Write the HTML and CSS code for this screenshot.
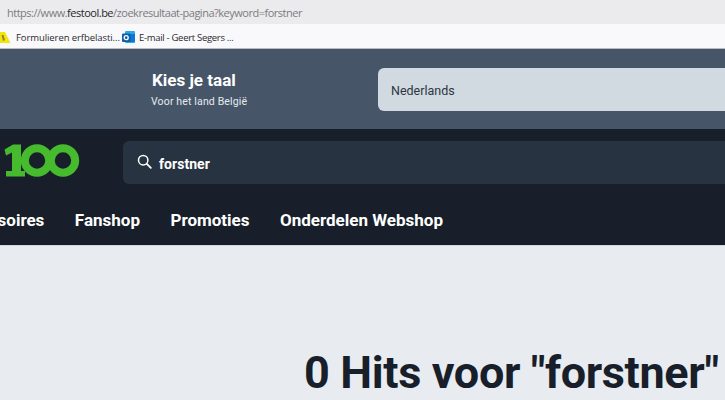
FILE: index.html
```html
<!DOCTYPE html>
<html lang="nl">
<head>
<meta charset="utf-8">
<title>Festool zoekresultaat</title>
<link rel="stylesheet" href="styles.css">
</head>
<body>
<div class="urlbar"><span class="url-dim">https://www.</span><span class="url-host">festool.be</span><span class="url-dim">/zoekresultaat-pagina?keyword=forstner</span></div>
<div class="bookmarks">
  <div class="bookmark bookmark-first">
    <svg class="favicon favicon-yellow" width="11" height="12" viewBox="0 0 11 12"><path d="M0 0h5l5.500 11H0z" fill="#f3e50c"/><path d="M1.500 3l2 0 1.500 5-2 1z" fill="#8f8a2a"/></svg>
    <span>Formulieren erfbelasti...</span>
  </div>
  <div class="bookmark bookmark-second">
    <svg class="favicon" width="13" height="13" viewBox="0 0 13 13"><rect x="3" y="0" width="10" height="12" rx="1" fill="#28a8ea"/><rect x="8" y="3" width="5" height="8" fill="#0f78d4"/><rect x="0" y="2.500" width="8.500" height="8.500" rx="1" fill="#0f5fa8"/><circle cx="4.200" cy="6.700" r="2" fill="none" stroke="#fff" stroke-width="1.300"/></svg>
    <span>E-mail - Geert Segers ...</span>
  </div>
</div>
<section class="lang">
  <div class="lang-text">
    <div class="lang-title">Kies je taal</div>
    <div class="lang-sub">Voor het land België</div>
  </div>
  <div class="lang-select">Nederlands</div>
</section>
<header class="header">
  <div class="header-top">
    <svg class="logo" width="76" height="33" viewBox="0 0 76 33">
      <path d="M0.500 5.500 9 0.500h8v26.500h4v5.500H2v-5.500h6V8.500l-6 3z" fill="#46bb2d"/>
      <circle cx="33" cy="16.500" r="12.200" fill="none" stroke="#46bb2d" stroke-width="8"/>
      <circle cx="59" cy="16.500" r="12.200" fill="none" stroke="#46bb2d" stroke-width="8"/>
    </svg>
    <div class="search">
      <svg class="search-icon" width="15" height="15" viewBox="0 0 15 15"><circle cx="6.200" cy="6.200" r="4.700" fill="none" stroke="#fff" stroke-width="1.500"/><path d="M9.800 9.800 13.800 13.800" stroke="#fff" stroke-width="1.800" stroke-linecap="round"/></svg>
      <span class="search-text">forstner</span>
    </div>
  </div>
  <nav class="nav">
    <a class="nav-item">Accessoires</a>
    <a class="nav-item">Fanshop</a>
    <a class="nav-item">Promoties</a>
    <a class="nav-item">Onderdelen Webshop</a>
  </nav>
</header>
<main class="main">
  <h1 class="hits">0 Hits voor "forstner"</h1>
</main>
</body>
</html>
```
FILE: styles.css
```css
* { box-sizing: border-box; }
html, body { margin: 0; padding: 0; height: 400px; overflow: hidden; }
body { width: 725px; background: #e8ecf1; font-family: "Roboto", "Liberation Sans", sans-serif; }

.urlbar {
  height: 24px;
  background: #ebebed;
  padding-left: 7px;
  font: 11px/25px "Open Sans", sans-serif;
  letter-spacing: -0.490px;
  white-space: nowrap;
}
.url-dim { color: #7b7b7e; }
.url-host { color: #27272a; }

.bookmarks {
  height: 25px;
  padding-top: 3px;
  background: #f9f9fb;
  border-bottom: 1px solid #b9bcc0;
  display: flex;
  align-items: center;
  font: 9.500px "Open Sans", sans-serif;
  letter-spacing: -0.080px;
  color: #2a2a2e;
  white-space: nowrap;
}
.bookmark { display: flex; align-items: center; gap: 4px; }
.bookmark-first { width: 122px; gap: 5px; }
.bookmark-second { letter-spacing: -0.300px; }
.favicon { flex: none; }

.lang {
  height: 80px;
  background: #465668;
  display: flex;
  align-items: center;
  padding-left: 152px;
}
.lang-text { width: 226px; color: #fff; }
.lang-title { font-size: 17px; font-weight: 700; line-height: 20px; }
.lang-sub { font-size: 10.500px; line-height: 15px; margin: 4px 0 0 -1px; color: #e6eaef; letter-spacing: 0.150px; }
.lang-select {
  flex: 1;
  height: 43px;
  margin-top: 1px;
  background: #d1d9e1;
  border-radius: 6px 0 0 6px;
  padding-left: 13px;
  font-size: 12.500px;
  line-height: 45px;
  color: #2d3642;
}

.header { height: 117px; background: #181f2a; border-bottom: 1px solid #d4d8dd; overflow: hidden; }
.header-top { height: 80px; padding: 12px 0 0 4px; display: flex; }
.logo { margin-top: 3px; flex: none; }
.search {
  margin-left: 43px;
  flex: 1;
  height: 43px;
  background: #283341;
  border-radius: 6px 0 0 6px;
  display: flex;
  align-items: center;
  gap: 7px;
  padding-left: 14px;
}
.search-icon { margin-top: -2px; }
.search-text { color: #fff; font-size: 14px; font-weight: 700; margin-top: 2px; letter-spacing: 0.050px; }

.nav {
  display: flex;
  justify-content: flex-end;
  gap: 30.500px;
  padding-right: 282px;
  white-space: nowrap;
  width: 725px;
}
.nav-item { color: #fff; font-size: 17px; font-weight: 700; line-height: 22px; flex: none; }

.main { padding: 100px 0 0 304px; }
.hits {
  margin: 0;
  font-size: 45px;
  font-weight: 700;
  line-height: 54px;
  letter-spacing: -0.350px;
  color: #181f2a;
  white-space: nowrap;
}
```
